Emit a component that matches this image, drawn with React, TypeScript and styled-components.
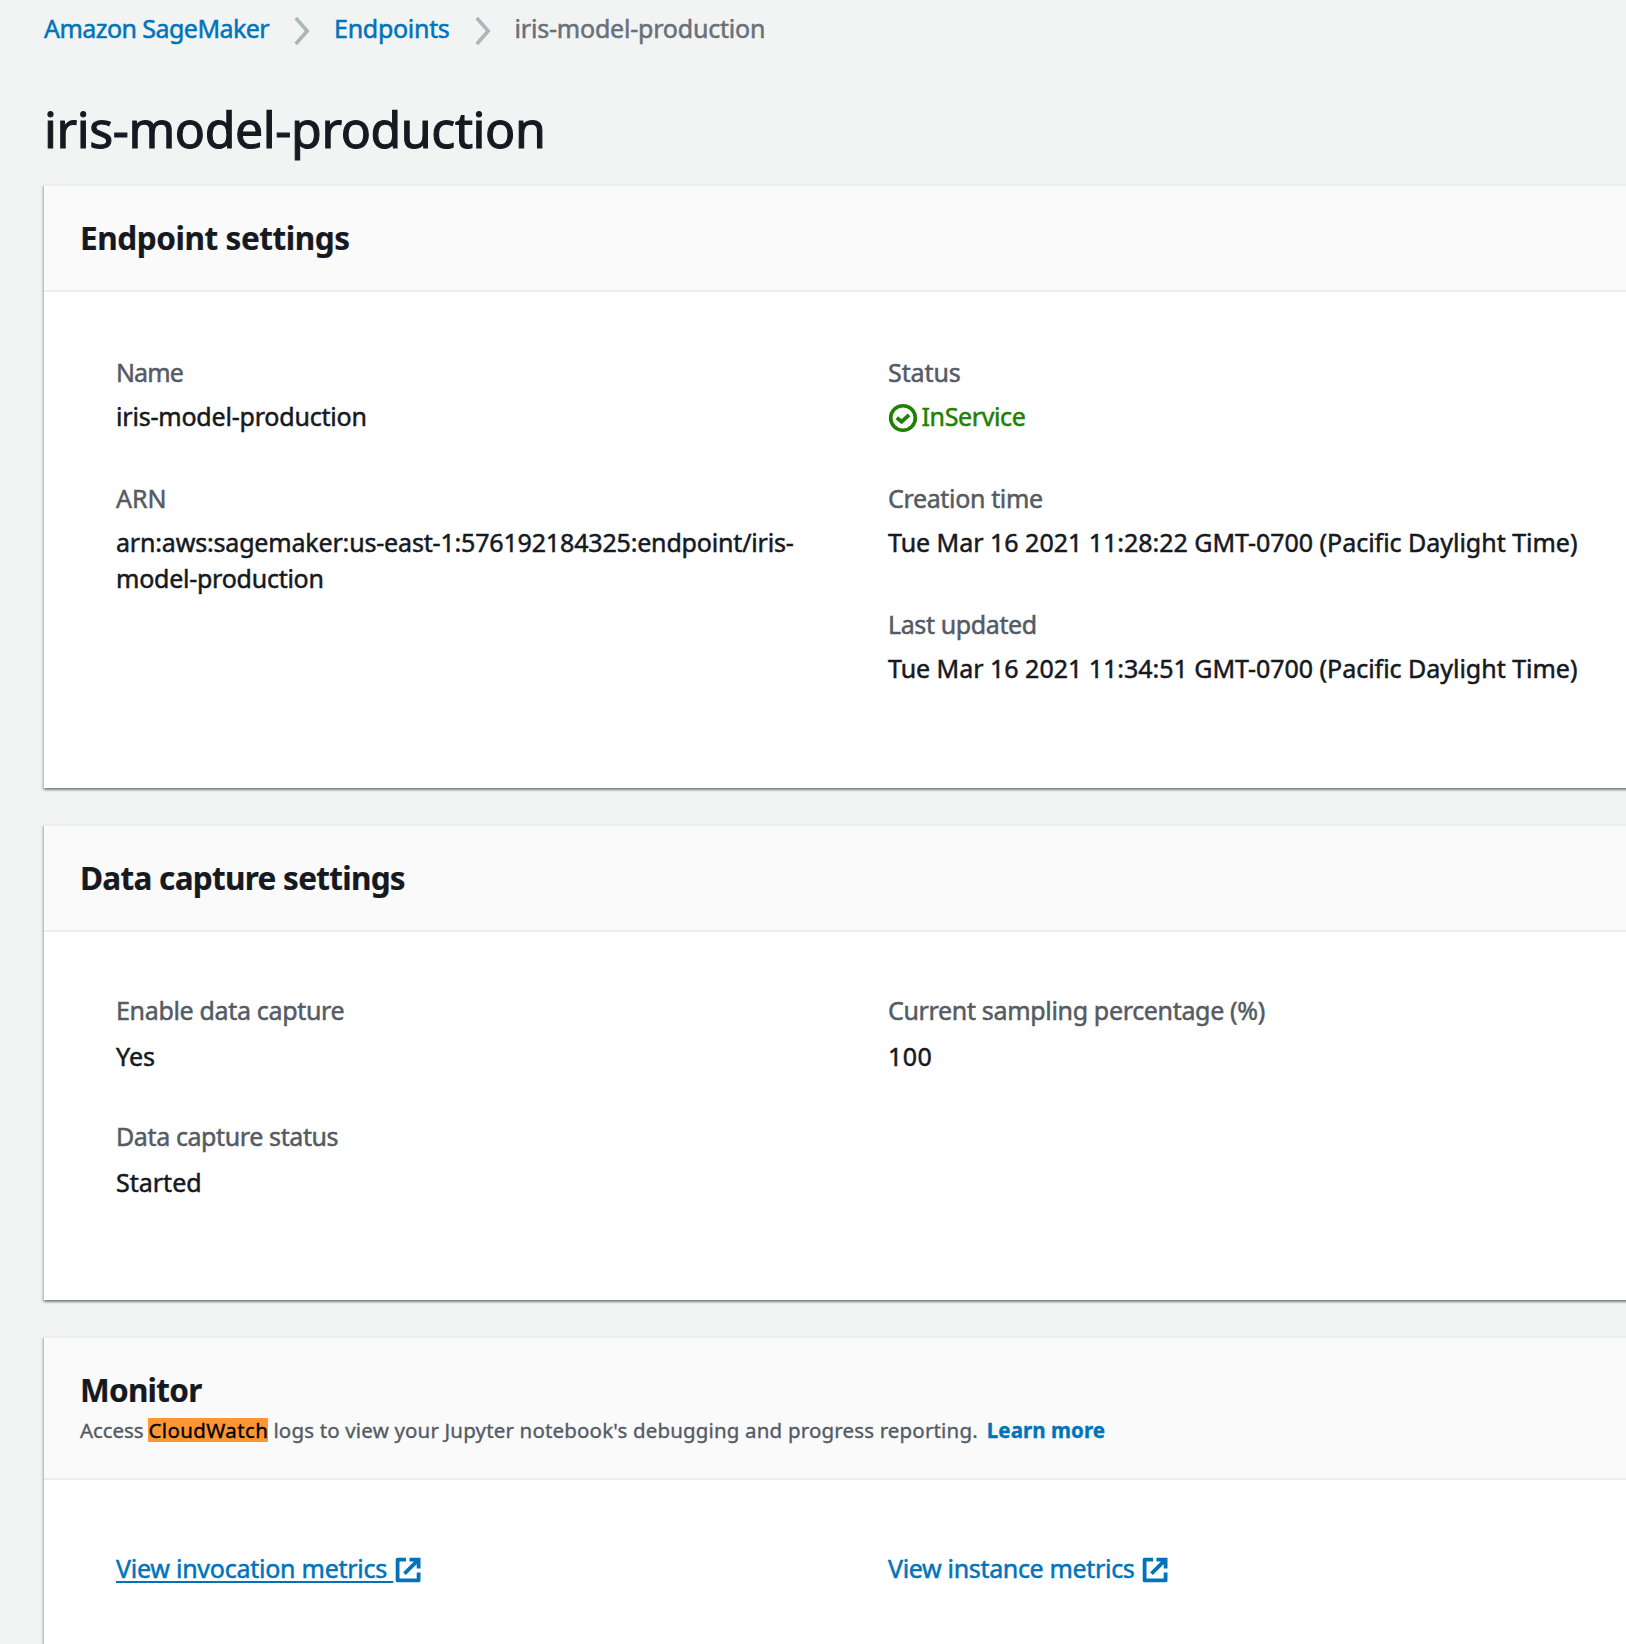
import React from 'react';
import styled, { createGlobalStyle } from 'styled-components';

const GlobalStyle = createGlobalStyle`
  * { box-sizing: border-box; }
  body {
    margin: 0;
    background: #f2f4f4;
    color: #16191f;
    font-family: 'Noto Sans', 'Open Sans', sans-serif;
    font-size: 25px;
    line-height: 36px;
    overflow: hidden;
    -webkit-text-stroke: 0.5px currentColor;
  }
`;

const Page = styled.main`
  height: 1644px;
  overflow: hidden;
  padding: 9px 0 0 44px;
`;

const Breadcrumbs = styled.nav`
  display: flex;
  align-items: center;
  height: 38px;
`;

const Text = styled.span<{ $track?: number }>`
  letter-spacing: ${(p) => p.$track ?? 0}px;
  white-space: pre;
`;

const CrumbLink = styled.a<{ $track?: number }>`
  color: #0073bb;
  letter-spacing: ${(p) => p.$track ?? 0}px;
  white-space: nowrap;
`;

const CurrentCrumb = styled(Text)`
  color: #687078;
`;

const ChevronIcon = styled.svg`
  width: 16px;
  height: 28px;
  margin: 6px 24px 0 25px;
  flex: none;
  fill: none;
  stroke: #aab7b8;
  stroke-width: 3.6;
`;

const Title = styled.h1`
  margin: 46px 0 0;
  font-size: 50px;
  font-weight: 400;
  line-height: 72px;
  letter-spacing: -0.4px;
  -webkit-text-stroke-width: 1.1px;
`;

const Panels = styled.div`
  padding-top: 19px;
`;

const Panel = styled.section<{ $height: number }>`
  width: 1640px;
  height: ${(p) => p.$height}px;
  margin-bottom: 36px;
  background: #fff;
  border-top: 2px solid #eaeded;
  box-shadow: 0 2px 2px 0 rgba(0, 28, 36, 0.3), 2px 2px 2px 0 rgba(0, 28, 36, 0.15),
    -2px 2px 2px 0 rgba(0, 28, 36, 0.15);
`;

const PanelHeader = styled.header<{ $height: number }>`
  height: ${(p) => p.$height}px;
  padding: 30px 36px 0;
  background: #fafafa;
  border-bottom: 2px solid #eaeded;
`;

const PanelTitle = styled.h2<{ $track?: number }>`
  margin: 0;
  font-size: 31.5px;
  font-weight: 700;
  line-height: 44px;
  letter-spacing: ${(p) => p.$track ?? 0}px;
  -webkit-text-stroke-width: 0.2px;
`;

const PanelNote = styled.p`
  display: flex;
  margin: 4px 0 0;
  color: #545b64;
  font-size: 20.5px;
  line-height: 28px;
  white-space: pre;
  -webkit-text-stroke-width: 0.35px;
`;

const Match = styled.mark`
  height: 24px;
  margin: 2px 5px 0;
  line-height: 24px;
  background: #ff9632;
  color: #000;
  letter-spacing: 0.4px;
`;

const NoteLink = styled.a`
  margin-left: 9px;
  color: #0073bb;
  font-weight: 700;
  letter-spacing: 0.06px;
`;

const Columns = styled.div<{ $top: number }>`
  display: grid;
  grid-template-columns: 772px 780px;
  padding: ${(p) => p.$top}px 0 0 72px;
`;

const Column = styled.div<{ $tight?: boolean }>`
  display: flex;
  flex-direction: column;
  gap: ${(p) => (p.$tight ? 44 : 46)}px;
`;

const Field = styled.div<{ $gap?: number }>`
  display: flex;
  flex-direction: column;
  gap: ${(p) => p.$gap ?? 8}px;
`;

const Label = styled(Text)`
  color: #545b64;
`;

const Value = styled.div<{ $track?: number }>`
  letter-spacing: ${(p) => p.$track ?? 0}px;
`;

const Status = styled.div`
  display: flex;
  align-items: center;
  gap: 4px;
  height: 36px;
  color: #1d8102;
`;

const StatusIcon = styled.svg`
  width: 30px;
  height: 30px;
  margin: 4px 0 0 -0.5px;
  fill: none;
  stroke: currentColor;
`;

const MetricLink = styled.a<{ $underlined?: boolean }>`
  display: flex;
  color: #0073bb;
  white-space: pre;
  text-decoration: ${(p) => (p.$underlined ? 'underline' : 'none')};
  text-decoration-thickness: 2px;
  text-underline-offset: 3px;
  text-decoration-skip-ink: none;
`;

const ExternalIcon = styled.svg`
  width: 28px;
  height: 28px;
  margin: 6px 0 0 0.5px;
  fill: none;
  stroke: currentColor;
  stroke-width: 3.8;
`;

const Chevron = () => (
  <ChevronIcon viewBox="0 0 16 28">
    <path d="M1.8 1 13.2 14 1.8 27" />
  </ChevronIcon>
);

const External = () => (
  <ExternalIcon viewBox="0 0 28 28">
    <path d="M12 3.6H3.6V24.4H24.6V16.5" strokeLinejoin="round" />
    <path d="M15.5 3.6H24.6V12.5M24 4.2 10.5 17.7" />
  </ExternalIcon>
);

interface FieldRowProps {
  label: string;
  labelTrack?: number;
  track?: number;
  gap?: number;
  children: React.ReactNode;
}

const FieldRow = ({ label, labelTrack, track, gap, children }: FieldRowProps) => (
  <Field $gap={gap}>
    <Label $track={labelTrack}>{label}</Label>
    <Value $track={track}>{children}</Value>
  </Field>
);

export default function App() {
  return (
    <Page>
      <GlobalStyle />
      <Breadcrumbs>
        <CrumbLink $track={-0.55}>Amazon SageMaker</CrumbLink>
        <Chevron />
        <CrumbLink $track={-0.3}>Endpoints</CrumbLink>
        <Chevron />
        <CurrentCrumb $track={-0.2}>iris-model-production</CurrentCrumb>
      </Breadcrumbs>
      <Title>iris-model-production</Title>

      <Panels>
        <Panel $height={604}>
          <PanelHeader $height={106}>
            <PanelTitle $track={-0.43}>Endpoint settings</PanelTitle>
          </PanelHeader>
          <Columns $top={62}>
            <Column>
              <FieldRow label="Name" labelTrack={-0.9} track={-0.2}>
                iris-model-production
              </FieldRow>
              <FieldRow label="ARN">
                <Text $track={-0.17}>arn:aws:sagemaker:us-east-1:576192184325:endpoint/iris-</Text>
                <br />
                <Text $track={-0.25}>model-production</Text>
              </FieldRow>
            </Column>
            <Column>
              <Field>
                <Label $track={-0.1}>Status</Label>
                <Status>
                  <StatusIcon viewBox="0 0 30 30">
                    <circle cx="15" cy="15" r="12.3" strokeWidth="3.6" />
                    <path d="M8.8 14.8 13.6 18.8 21 11.8" strokeWidth="3.8" />
                  </StatusIcon>
                  <Text $track={-0.38}>InService</Text>
                </Status>
              </Field>
              <FieldRow label="Creation time" labelTrack={-0.35} track={-0.02}>
                Tue Mar 16 2021 11:28:22 GMT-0700 (Pacific Daylight Time)
              </FieldRow>
              <FieldRow label="Last updated" labelTrack={-0.38} track={-0.02}>
                Tue Mar 16 2021 11:34:51 GMT-0700 (Pacific Daylight Time)
              </FieldRow>
            </Column>
          </Columns>
        </Panel>

        <Panel $height={476}>
          <PanelHeader $height={106}>
            <PanelTitle $track={-0.71}>Data capture settings</PanelTitle>
          </PanelHeader>
          <Columns $top={60}>
            <Column $tight>
              <FieldRow label="Enable data capture" labelTrack={-0.33} gap={10}>
                Yes
              </FieldRow>
              <FieldRow label="Data capture status" labelTrack={-0.39} gap={10}>
                Started
              </FieldRow>
            </Column>
            <Column $tight>
              <FieldRow label="Current sampling percentage (%)" labelTrack={-0.33} track={0.4} gap={10}>
                100
              </FieldRow>
            </Column>
          </Columns>
        </Panel>

        <Panel $height={400}>
          <PanelHeader $height={142}>
            <PanelTitle $track={-0.75}>Monitor</PanelTitle>
            <PanelNote>
              <Text $track={-0.1}>Access</Text>
              <Match>CloudWatch</Match>
              <Text $track={0.165}>
                logs to view your Jupyter notebook's debugging and progress reporting.
              </Text>
              <NoteLink>Learn more</NoteLink>
            </PanelNote>
          </PanelHeader>
          <Columns $top={70}>
            <MetricLink $underlined>
              <Text $track={-0.25}>{'View invocation metrics '}</Text>
              <External />
            </MetricLink>
            <MetricLink>
              <Text $track={-0.33}>{'View instance metrics '}</Text>
              <External />
            </MetricLink>
          </Columns>
        </Panel>
      </Panels>
    </Page>
  );
}
